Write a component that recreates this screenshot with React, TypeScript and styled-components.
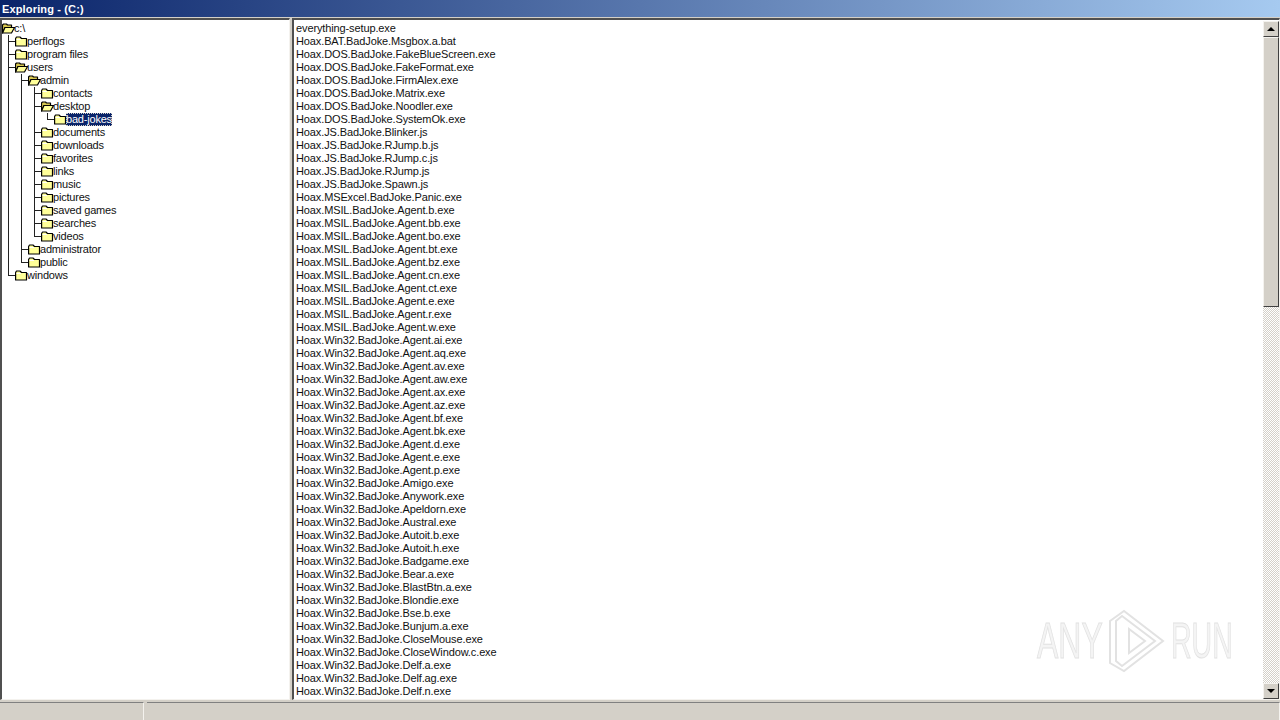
import React from 'react';
import styled, { createGlobalStyle } from 'styled-components';

const GlobalStyle = createGlobalStyle`
  html, body {
    margin: 0;
    padding: 0;
    width: 1280px;
    height: 720px;
    overflow: hidden;
    background: #d4d0c8;
  }
`;

const Win = styled.div`
  position: relative;
  display: flex;
  flex-direction: column;
  width: 1280px;
  height: 720px;
  background: #d4d0c8;
  font-family: "Liberation Sans", Arial, sans-serif;
  font-size: 11px;
  color: #000;
  overflow: hidden;
`;

const TitleBar = styled.div`
  flex: 0 0 17px;
  display: flex;
  align-items: center;
  padding: 1px 0 0 2px;
  box-sizing: border-box;
  background: linear-gradient(90deg, #0a246a 0%, #a6caf0 100%);
  color: #fff;
  font-weight: bold;
  font-size: 11px;
  letter-spacing: 0.15px;
`;

const Body = styled.div`
  flex: 1;
  min-height: 0;
  display: flex;
  gap: 2px;
  padding: 1px 0 2px;
`;

const Pane = styled.div<{ $wide?: boolean }>`
  box-sizing: border-box;
  display: flex;
  background: #fff;
  border-top: 2px solid #505050;
  border-left: 2px solid #505050;
  border-right: 1px solid #f4f2ee;
  border-bottom: 1px solid #f4f2ee;
  overflow: hidden;
  ${(p) => (p.$wide ? 'flex: 1; min-width: 0;' : 'flex: 0 0 290px;')}
`;

const Tree = styled.div`
  padding-top: 2px;
`;

const TreeRow = styled.div`
  display: flex;
  align-items: center;
  height: 13px;
  white-space: nowrap;
`;

const GUIDE_BG: Record<string, string> = {
  pipe: 'linear-gradient(#222, #222) 6px 0 / 1px 13px no-repeat',
  tee: 'linear-gradient(#222, #222) 6px 0 / 1px 13px no-repeat, linear-gradient(#222, #222) 6px 6px / 7px 1px no-repeat',
  elbow: 'linear-gradient(#222, #222) 6px 0 / 1px 7px no-repeat, linear-gradient(#222, #222) 6px 6px / 7px 1px no-repeat',
};

const Guide = styled.span<{ $kind: string }>`
  flex: 0 0 13px;
  height: 13px;
  background: ${(p) => GUIDE_BG[p.$kind]};
`;

const FolderSvg = styled.svg`
  flex: 0 0 13px;
  width: 13px;
  height: 13px;
  display: block;
`;

const TreeLabel = styled.span<{ $selected?: boolean }>`
  height: 13px;
  line-height: 13px;
  margin-left: -1px;
  letter-spacing: -0.2px;
  color: ${(p) => (p.$selected ? '#fff' : '#111')};
  background: ${(p) => (p.$selected ? '#0a246a' : 'transparent')};
  outline: ${(p) => (p.$selected ? '1px dotted #d4d0c8' : 'none')};
  outline-offset: -1px;
`;

const Listing = styled.div`
  flex: 1;
  padding: 2px 0 0 2px;
  overflow: hidden;
`;

const FileRow = styled.div`
  height: 13px;
  line-height: 13px;
  letter-spacing: -0.12px;
  white-space: nowrap;
  color: #111;
`;

const ScrollBar = styled.div`
  flex: 0 0 16px;
  margin-top: 1px;
  display: flex;
  flex-direction: column;
  background-color: #fff;
  background-image: repeating-conic-gradient(#d4d0c8 0 25%, #fff 0 50%);
  background-size: 2px 2px;
`;

const ScrollButton = styled.div`
  box-sizing: border-box;
  flex: 0 0 16px;
  display: flex;
  align-items: center;
  justify-content: center;
  background: #d4d0c8;
  border: 1px solid;
  border-color: #f4f2ee #404040 #404040 #f4f2ee;
`;

const Thumb = styled.div`
  box-sizing: border-box;
  flex: 0 0 270px;
  background: #d4d0c8;
  border: 1px solid;
  border-color: #f4f2ee #404040 #404040 #f4f2ee;
`;

const Track = styled.div`
  flex: 1;
`;

const Arrow = styled.span<{ $down?: boolean }>`
  width: 0;
  height: 0;
  border-left: 4px solid transparent;
  border-right: 4px solid transparent;
  ${(p) => (p.$down ? 'border-top: 4px solid #000;' : 'border-bottom: 4px solid #000;')}
`;

const StatusBar = styled.div`
  flex: 0 0 18px;
  display: flex;
  gap: 3px;
`;

const StatusCell = styled.div<{ $fill?: boolean }>`
  box-sizing: border-box;
  border-top: 1px solid #808080;
  border-right: 1px solid #f4f2ee;
  background: #d4d0c8;
  ${(p) => (p.$fill ? 'flex: 1;' : 'flex: 0 0 144px;')}
`;

const Watermark = styled.div`
  position: absolute;
  left: 1037px;
  top: 609px;
  display: flex;
  align-items: center;
  gap: 6px;
  pointer-events: none;
  filter: blur(0.4px);
`;

const WatermarkText = styled.span<{ $squeeze: number }>`
  display: inline-block;
  width: 64px;
  font-size: 50px;
  line-height: 50px;
  color: #f4f4f4;
  -webkit-text-stroke: 1px #e2e2e2;
  transform: scaleX(${(p) => p.$squeeze});
  transform-origin: left center;
  white-space: nowrap;
`;

type GuideKind = 'pipe' | 'tee' | 'elbow';
type TreeItem = { label: string; guides: GuideKind[]; open?: boolean; selected?: boolean };

const TREE: TreeItem[] = [
  { label: 'c:\\', guides: [], open: true },
  { label: 'perflogs', guides: ['tee'] },
  { label: 'program files', guides: ['tee'] },
  { label: 'users', guides: ['tee'], open: true },
  { label: 'admin', guides: ['pipe', 'tee'], open: true },
  { label: 'contacts', guides: ['pipe', 'pipe', 'tee'] },
  { label: 'desktop', guides: ['pipe', 'pipe', 'tee'], open: true },
  { label: 'bad-jokes', guides: ['pipe', 'pipe', 'pipe', 'elbow'], selected: true },
  { label: 'documents', guides: ['pipe', 'pipe', 'tee'] },
  { label: 'downloads', guides: ['pipe', 'pipe', 'tee'] },
  { label: 'favorites', guides: ['pipe', 'pipe', 'tee'] },
  { label: 'links', guides: ['pipe', 'pipe', 'tee'] },
  { label: 'music', guides: ['pipe', 'pipe', 'tee'] },
  { label: 'pictures', guides: ['pipe', 'pipe', 'tee'] },
  { label: 'saved games', guides: ['pipe', 'pipe', 'tee'] },
  { label: 'searches', guides: ['pipe', 'pipe', 'tee'] },
  { label: 'videos', guides: ['pipe', 'pipe', 'elbow'] },
  { label: 'administrator', guides: ['pipe', 'tee'] },
  { label: 'public', guides: ['pipe', 'elbow'] },
  { label: 'windows', guides: ['elbow'] },
];

const FILES = [
  'everything-setup.exe',
  'Hoax.BAT.BadJoke.Msgbox.a.bat',
  'Hoax.DOS.BadJoke.FakeBlueScreen.exe',
  'Hoax.DOS.BadJoke.FakeFormat.exe',
  'Hoax.DOS.BadJoke.FirmAlex.exe',
  'Hoax.DOS.BadJoke.Matrix.exe',
  'Hoax.DOS.BadJoke.Noodler.exe',
  'Hoax.DOS.BadJoke.SystemOk.exe',
  'Hoax.JS.BadJoke.Blinker.js',
  'Hoax.JS.BadJoke.RJump.b.js',
  'Hoax.JS.BadJoke.RJump.c.js',
  'Hoax.JS.BadJoke.RJump.js',
  'Hoax.JS.BadJoke.Spawn.js',
  'Hoax.MSExcel.BadJoke.Panic.exe',
  'Hoax.MSIL.BadJoke.Agent.b.exe',
  'Hoax.MSIL.BadJoke.Agent.bb.exe',
  'Hoax.MSIL.BadJoke.Agent.bo.exe',
  'Hoax.MSIL.BadJoke.Agent.bt.exe',
  'Hoax.MSIL.BadJoke.Agent.bz.exe',
  'Hoax.MSIL.BadJoke.Agent.cn.exe',
  'Hoax.MSIL.BadJoke.Agent.ct.exe',
  'Hoax.MSIL.BadJoke.Agent.e.exe',
  'Hoax.MSIL.BadJoke.Agent.r.exe',
  'Hoax.MSIL.BadJoke.Agent.w.exe',
  'Hoax.Win32.BadJoke.Agent.ai.exe',
  'Hoax.Win32.BadJoke.Agent.aq.exe',
  'Hoax.Win32.BadJoke.Agent.av.exe',
  'Hoax.Win32.BadJoke.Agent.aw.exe',
  'Hoax.Win32.BadJoke.Agent.ax.exe',
  'Hoax.Win32.BadJoke.Agent.az.exe',
  'Hoax.Win32.BadJoke.Agent.bf.exe',
  'Hoax.Win32.BadJoke.Agent.bk.exe',
  'Hoax.Win32.BadJoke.Agent.d.exe',
  'Hoax.Win32.BadJoke.Agent.e.exe',
  'Hoax.Win32.BadJoke.Agent.p.exe',
  'Hoax.Win32.BadJoke.Amigo.exe',
  'Hoax.Win32.BadJoke.Anywork.exe',
  'Hoax.Win32.BadJoke.Apeldorn.exe',
  'Hoax.Win32.BadJoke.Austral.exe',
  'Hoax.Win32.BadJoke.Autoit.b.exe',
  'Hoax.Win32.BadJoke.Autoit.h.exe',
  'Hoax.Win32.BadJoke.Badgame.exe',
  'Hoax.Win32.BadJoke.Bear.a.exe',
  'Hoax.Win32.BadJoke.BlastBtn.a.exe',
  'Hoax.Win32.BadJoke.Blondie.exe',
  'Hoax.Win32.BadJoke.Bse.b.exe',
  'Hoax.Win32.BadJoke.Bunjum.a.exe',
  'Hoax.Win32.BadJoke.CloseMouse.exe',
  'Hoax.Win32.BadJoke.CloseWindow.c.exe',
  'Hoax.Win32.BadJoke.Delf.a.exe',
  'Hoax.Win32.BadJoke.Delf.ag.exe',
  'Hoax.Win32.BadJoke.Delf.n.exe',
];

function Folder({ open }: { open?: boolean }) {
  if (open) {
    return (
      <FolderSvg viewBox="0 0 13 13">
        <path d="M0.5 11V3L1.5 2H4.5L5.5 3H9.5V5.5H3L0.5 11Z" fill="#d8c850" stroke="#000" strokeWidth="1.2" strokeLinejoin="round" />
        <path d="M0.5 11L3 5.5H12.5L9.5 11Z" fill="#ffff99" stroke="#000" strokeWidth="1.2" strokeLinejoin="round" />
      </FolderSvg>
    );
  }
  return (
    <FolderSvg viewBox="0 0 13 13">
      <path d="M0.6 11V3.5L1.5 2H5L6.5 3.5H11.5V11Z" fill="#ffff99" stroke="#000" strokeWidth="1.2" strokeLinejoin="round" />
      <path d="M1.5 4.5H6" stroke="#fff" />
    </FolderSvg>
  );
}

function Logo() {
  return (
    <svg width="58" height="64" viewBox="0 0 58 64" fill="none" stroke="#e2e2e2" strokeWidth="2">
      <path d="M3 12L17 2L56 32L17 62L3 54V12Z" />
      <path d="M9 12V52L15 57L48 32L15 7Z" />
      <path d="M22 20V44L38 32Z" />
    </svg>
  );
}

export default function App() {
  return (
    <Win>
      <GlobalStyle />
      <TitleBar>Exploring - (C:)</TitleBar>
      <Body>
        <Pane>
          <Tree>
            {TREE.map((item) => (
              <TreeRow key={item.label}>
                {item.guides.map((kind, i) => (
                  <Guide key={i} $kind={kind} />
                ))}
                <Folder open={item.open} />
                <TreeLabel $selected={item.selected}>{item.label}</TreeLabel>
              </TreeRow>
            ))}
          </Tree>
        </Pane>
        <Pane $wide>
          <Listing>
            {FILES.map((name) => (
              <FileRow key={name}>{name}</FileRow>
            ))}
          </Listing>
          <ScrollBar>
            <ScrollButton><Arrow /></ScrollButton>
            <Thumb />
            <Track />
            <ScrollButton><Arrow $down /></ScrollButton>
          </ScrollBar>
        </Pane>
      </Body>
      <StatusBar>
        <StatusCell />
        <StatusCell $fill />
      </StatusBar>
      <Watermark>
        <WatermarkText $squeeze={0.64}>ANY</WatermarkText>
        <Logo />
        <WatermarkText $squeeze={0.57}>RUN</WatermarkText>
      </Watermark>
    </Win>
  );
}
